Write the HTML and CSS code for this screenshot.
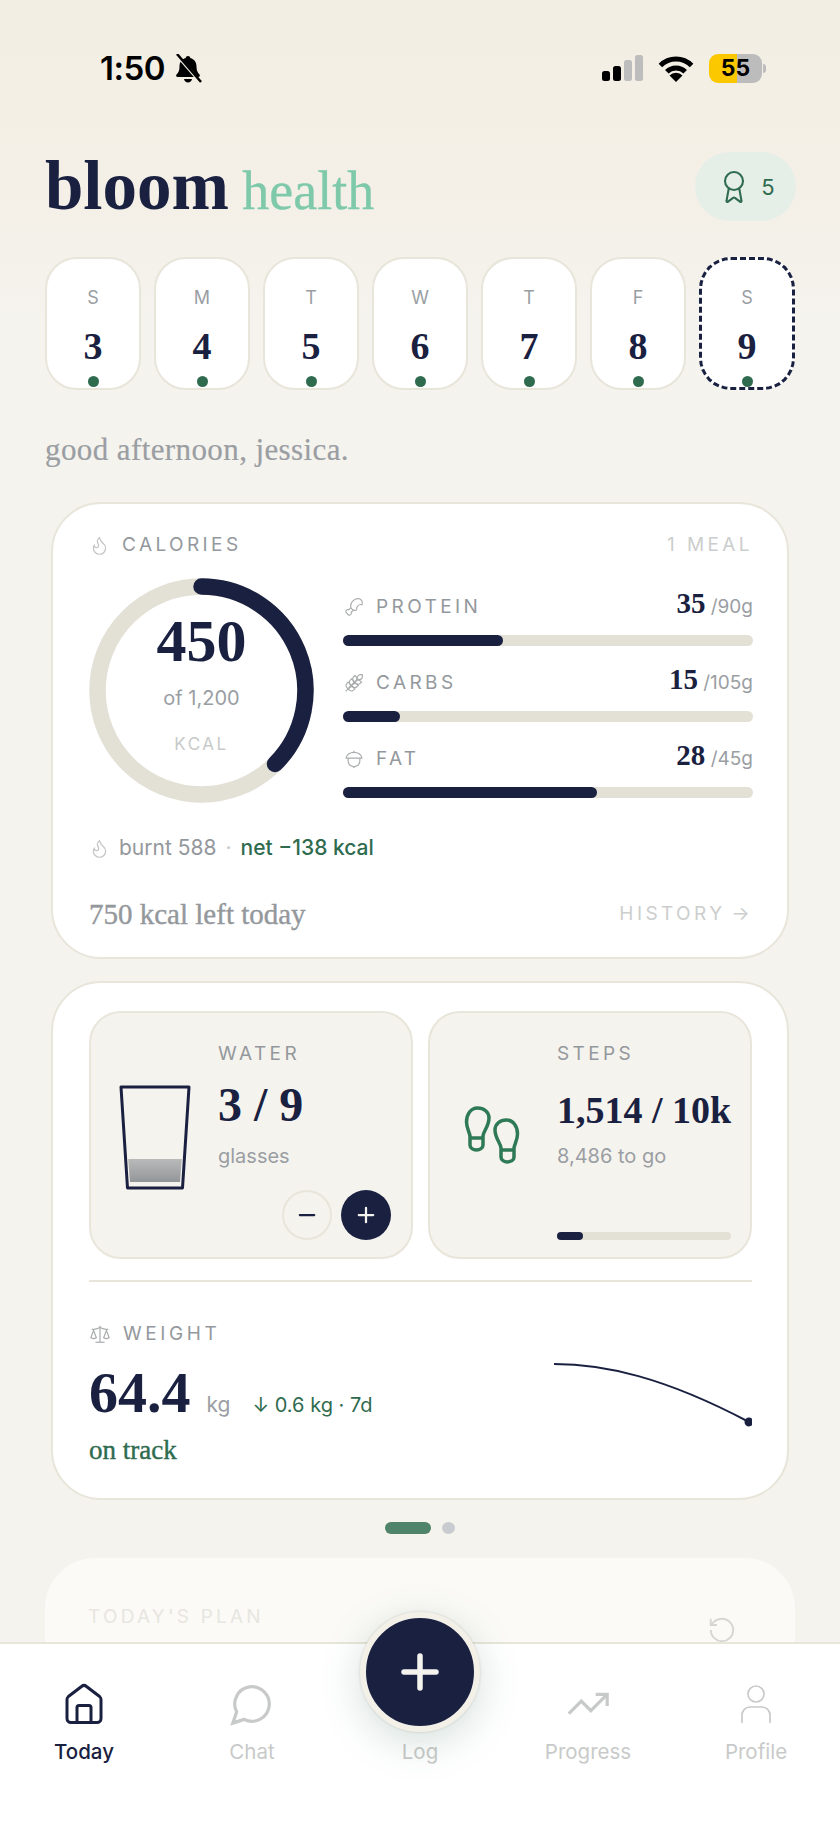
FILE: index.html
```html
<!DOCTYPE html>
<html lang="en">
<head>
    <meta charset="UTF-8">
    <meta name="viewport" content="width=device-width, initial-scale=1.0">
    <title>bloom health</title>
    <link rel="stylesheet" href="styles.css">
</head>
<body>
    <div class="app">
        <div class="status-bar">
            <div class="status-left">
                <span class="clock">1:50</span>
                <svg class="bell" viewBox="0 0 28 29">
                    <path d="M14 2c1.300 0 2.200.9 2.300 2.100 4 1 6.200 4.300 6.200 8.400 0 4 1 5.800 3 8 .8 1 .2 2.500-1.200 2.500H3.700c-1.400 0-2-1.500-1.200-2.500 2-2.200 3-4 3-8 0-4.100 2.200-7.400 6.200-8.400C11.800 2.900 12.700 2 14 2z"/>
                    <path d="M10 25h8c-.3 2-2 3.500-4 3.500s-3.700-1.500-4-3.500z"/>
                    <path class="bell-gap" d="M1 -1 27 29"/>
                    <path class="bell-slash" d="M3 0 27 28"/>
                </svg>
            </div>
            <div class="status-right">
                <svg class="signal" viewBox="0 0 41 26">
                    <rect x="0" y="16" width="8" height="10" rx="2.500"/>
                    <rect x="11" y="11" width="8" height="15" rx="2.500"/>
                    <rect class="off" x="22" y="5" width="8" height="21" rx="2.500"/>
                    <rect class="off" x="33" y="0" width="8" height="26" rx="2.500"/>
                </svg>
                <svg class="wifi" viewBox="0 0 36 27">
                    <path d="M2.400 10.400a22 22 0 0 1 31.200 0"/>
                    <path d="M8.800 16.800a13 13 0 0 1 18.400 0"/>
                    <path class="wifi-dot" d="M18 27 11.500 20.500a9 9 0 0 1 13 0z"/>
                </svg>
                <div class="battery">55</div>
            </div>
        </div>

        <div class="top-row">
            <h1 class="logo">bloom <span>health</span></h1>
            <div class="award">
                <svg viewBox="0 0 24 24"><path d="m15.500 12.900 1.500 8.500a.5.500 0 0 1-.8.500l-3.600-2.700a1 1 0 0 0-1.200 0l-3.600 2.700a.5.500 0 0 1-.8-.5l1.500-8.500"/><circle cx="12" cy="8" r="6"/></svg>
                <span>5</span>
            </div>
        </div>

        <div class="days">
            <div class="day"><span class="day-name">S</span><span class="day-num">3</span><i class="day-dot"></i></div>
            <div class="day"><span class="day-name">M</span><span class="day-num">4</span><i class="day-dot"></i></div>
            <div class="day"><span class="day-name">T</span><span class="day-num">5</span><i class="day-dot"></i></div>
            <div class="day"><span class="day-name">W</span><span class="day-num">6</span><i class="day-dot"></i></div>
            <div class="day"><span class="day-name">T</span><span class="day-num">7</span><i class="day-dot"></i></div>
            <div class="day"><span class="day-name">F</span><span class="day-num">8</span><i class="day-dot"></i></div>
            <div class="day today"><span class="day-name">S</span><span class="day-num">9</span><i class="day-dot"></i></div>
        </div>

        <p class="greeting">good afternoon, jessica.</p>

        <section class="card calories">
            <div class="card-head">
                <span class="label">
                    <svg class="flame" viewBox="0 0 24 24"><path d="M8.500 14.500A2.500 2.500 0 0 0 11 12c0-1.400-.5-2-1-3-1.100-2.100-.2-4.100 2-6 .5 2.500 2 4.900 4 6.500s3 3.500 3 5.500a7 7 0 1 1-14 0c0-1.200.4-2.300 1-3a2.500 2.500 0 0 0 2.500 2.500z"/></svg>
                    CALORIES
                </span>
                <span class="label faint">1 MEAL</span>
            </div>

            <div class="calorie-body">
                <div class="ring">
                    <svg viewBox="0 0 225 225">
                        <circle class="ring-track" cx="112.500" cy="112.500" r="104"/>
                        <path class="ring-fill" d="M112.500 8.500A104 104 0 0 1 186 186"/>
                    </svg>
                    <div class="ring-text">
                        <span class="ring-num">450</span>
                        <span class="ring-of">of 1,200</span>
                        <span class="ring-unit">KCAL</span>
                    </div>
                </div>

                <div class="macros">
                    <div class="macro">
                        <div class="macro-head">
                            <span class="label">
                                <svg class="macro-icon" viewBox="0 0 24 24"><path d="M15.400 15.600a7.900 6 135 1 1 6.200-6.200 4.500 3.400 135 0 0-6.200 6.200"/><path d="m8.300 12.700-2.600 2.600a2.500 2.500 0 1 0-1.700 4.700 2.500 2.500 0 1 0 4.700-1.700l2.600-2.600"/></svg>
                                PROTEIN
                            </span>
                            <span class="macro-val"><b>35</b> /90g</span>
                        </div>
                        <div class="bar"><div class="bar-fill" style="width: 39%"></div></div>
                    </div>
                    <div class="macro">
                        <div class="macro-head">
                            <span class="label">
                                <svg class="macro-icon" viewBox="0 0 24 24"><path d="M2 22 16 8"/><path d="M3.500 12.500 5 11l1.500 1.500a3.500 3.500 0 0 1 0 5L5 19l-1.500-1.500a3.500 3.500 0 0 1 0-5z"/><path d="M7.500 8.500 9 7l1.500 1.500a3.500 3.500 0 0 1 0 5L9 15l-1.500-1.500a3.500 3.500 0 0 1 0-5z"/><path d="M11.500 4.500 13 3l1.500 1.500a3.500 3.500 0 0 1 0 5L13 11l-1.500-1.500a3.500 3.500 0 0 1 0-5z"/><path d="M20 2h2v2a4 4 0 0 1-4 4h-2V6a4 4 0 0 1 4-4z"/><path d="M11.500 17.500 13 19l-1.500 1.500a3.500 3.500 0 0 1-5 0L5 19l1.500-1.500a3.500 3.500 0 0 1 5 0z"/><path d="M15.500 13.500 17 15l-1.500 1.500a3.500 3.500 0 0 1-5 0L9 15l1.500-1.500a3.500 3.500 0 0 1 5 0z"/><path d="M19.500 9.500 21 11l-1.500 1.500a3.500 3.500 0 0 1-5 0L13 11l1.500-1.500a3.500 3.500 0 0 1 5 0z"/></svg>
                                CARBS
                            </span>
                            <span class="macro-val"><b>15</b> /105g</span>
                        </div>
                        <div class="bar"><div class="bar-fill" style="width: 14%"></div></div>
                    </div>
                    <div class="macro">
                        <div class="macro-head">
                            <span class="label">
                                <svg class="macro-icon" viewBox="0 0 24 24"><path d="M12 4V2"/><path d="M2.500 11c.5-4.500 5-7 9.500-7s9 2.500 9.500 7z"/><path d="M5 11v3a7 7 0 0 0 5.300 6.800c.7.200 1.200.6 1.700 1.200.5-.6 1-1 1.700-1.200A7 7 0 0 0 19 14v-3"/></svg>
                                FAT
                            </span>
                            <span class="macro-val"><b>28</b> /45g</span>
                        </div>
                        <div class="bar"><div class="bar-fill" style="width: 62%"></div></div>
                    </div>
                </div>
            </div>

            <div class="burnt">
                <svg class="flame" viewBox="0 0 24 24"><path d="M8.500 14.500A2.500 2.500 0 0 0 11 12c0-1.400-.5-2-1-3-1.100-2.100-.2-4.100 2-6 .5 2.500 2 4.900 4 6.500s3 3.500 3 5.500a7 7 0 1 1-14 0c0-1.200.4-2.300 1-3a2.500 2.500 0 0 0 2.500 2.500z"/></svg>
                <span>burnt 588</span>
                <span class="burnt-sep">·</span>
                <span class="net">net −138 kcal</span>
            </div>

            <div class="card-foot">
                <span class="left-today">750 kcal left today</span>
                <span class="label faint">HISTORY <span class="arrow">→</span></span>
            </div>
        </section>

        <section class="card trackers">
            <div class="tiles">
                <div class="tile">
                    <div class="tile-art">
                        <svg class="glass" viewBox="0 0 72 106">
                            <defs>
                                <linearGradient id="waterFill" x1="0" y1="0" x2="0" y2="1">
                                    <stop offset="0" stop-color="#b9baba"/>
                                    <stop offset="1" stop-color="#939699"/>
                                </linearGradient>
                            </defs>
                            <path d="M9.200 74H62.800L61 97H11z" fill="url(#waterFill)"/>
                            <path class="glass-line" d="M2 2H70L63.500 103H8.500z"/>
                        </svg>
                    </div>
                    <div class="tile-body">
                        <span class="label">WATER</span>
                        <span class="tile-num">3 / 9</span>
                        <span class="tile-sub">glasses</span>
                        <div class="stepper">
                            <button class="step-btn minus"><svg viewBox="0 0 20 20"><path d="M2 10H18"/></svg></button>
                            <button class="step-btn plus"><svg viewBox="0 0 20 20"><path d="M2 10H18M10 2V18"/></svg></button>
                        </div>
                    </div>
                </div>
                <div class="tile">
                    <div class="tile-art">
                        <svg class="feet" viewBox="0 0 56 62">
                            <path d="M13.500 2C7 2 2.500 8 2.500 16c0 6 3 10 3.500 14v9c0 6.500 13 6.500 13 0v-9c.5-5 6-10 6-18C25 6 20 2 13.500 2z"/>
                            <path d="M6 32h13"/>
                            <path d="M42.500 14c6.500 0 11 6 11 14 0 6-3 10-3.500 14v9c0 6.500-13 6.500-13 0v-9c-.5-5-6-10-6-18 0-6 5-10 11.500-10z"/>
                            <path d="M37 44h13"/>
                        </svg>
                    </div>
                    <div class="tile-body">
                        <span class="label">STEPS</span>
                        <span class="tile-num steps-num">1,514 / 10k</span>
                        <span class="tile-sub">8,486 to go</span>
                        <div class="bar steps-bar"><div class="bar-fill" style="width: 15%"></div></div>
                    </div>
                </div>
            </div>

            <div class="divider"></div>

            <span class="label weight-label">
                <svg class="scale" viewBox="0 0 24 24"><path d="m16 16 3-8 3 8c-.9.600-1.900 1-3 1s-2.100-.4-3-1z"/><path d="m2 16 3-8 3 8c-.9.600-1.900 1-3 1s-2.100-.4-3-1z"/><path d="M7 21h10"/><path d="M12 3v18"/><path d="M3 7h2c2 0 5-1 7-2 2 1 5 2 7 2h2"/></svg>
                WEIGHT
            </span>
            <div class="weight-body">
                <div>
                    <div class="weight-row">
                        <span class="weight-num">64.4</span>
                        <span class="weight-unit">kg</span>
                        <span class="weight-delta">↓ 0.6 kg · 7d</span>
                    </div>
                    <p class="on-track">on track</p>
                </div>
                <svg class="spark" viewBox="0 0 198 64">
                    <path d="M0 1C50 1 110 14 195 59"/>
                    <circle cx="195" cy="59" r="4.500"/>
                </svg>
            </div>
        </section>

        <div class="pager"><i class="pager-on"></i><i class="pager-off"></i></div>

        <section class="plan">
            <span class="plan-title">TODAY'S PLAN</span>
            <svg class="refresh" viewBox="0 0 24 24"><path d="M3 12a9 9 0 1 0 9-9 9.800 9.800 0 0 0-6.700 2.700L3 8"/><path d="M3 3v5h5"/></svg>
        </section>

        <nav class="tabbar">
            <div class="tab active">
                <svg class="tab-icon" viewBox="0 0 38 41" width="38" height="41"><path d="M6 39h26a4 4 0 0 0 4-4V16c0-1.200-.5-2.200-1.400-3L21.500 3c-1.400-1.200-3.600-1.200-5 0L3.400 13c-.9.800-1.400 1.800-1.400 3v19a4 4 0 0 0 4 4z"/><path d="M12 39V24a2 2 0 0 1 2-2h10a2 2 0 0 1 2 2v15"/></svg>
                <span>Today</span>
            </div>
            <div class="tab">
                <svg class="tab-icon" viewBox="0 0 24 24" width="46" height="46"><path d="M7.900 20A9 9 0 1 0 4 16.100L2 22z"/></svg>
                <span>Chat</span>
            </div>
            <div class="tab">
                <div class="tab-icon-space"></div>
                <span>Log</span>
            </div>
            <div class="tab">
                <svg class="tab-icon" viewBox="0 0 24 24" width="46" height="46"><path d="M22 7 13.500 15.500 8.500 10.500 2 17"/><path d="M16 7h6v6"/></svg>
                <span>Progress</span>
            </div>
            <div class="tab">
                <svg class="tab-icon" viewBox="0 0 32 40" width="32" height="40"><circle cx="16" cy="10" r="8"/><path d="M2 39V31a8 8 0 0 1 8-8h12a8 8 0 0 1 8 8v8"/></svg>
                <span>Profile</span>
            </div>
            <button class="fab"><svg viewBox="0 0 38 38"><path d="M3 19H35M19 3V35"/></svg></button>
        </nav>
    </div>
</body>
</html>
```
FILE: styles.css
```css
* {
    margin: 0;
    padding: 0;
    box-sizing: border-box;
}

body {
    font-family: Inter, "Liberation Sans", sans-serif;
    background-color: #f5f3ee;
}

svg {
    display: block;
}

.app {
    position: relative;
    width: 840px;
    height: 1826px;
    overflow: hidden;
    background: linear-gradient(#f2eee3 0, #f4f0e7 200px, #f5f3ee 320px, #f4f3ee 1826px);
}

/* status bar */
.status-bar {
    display: flex;
    justify-content: space-between;
    align-items: center;
    height: 136px;
    padding: 0 78px 0 100px;
}

.status-left {
    display: flex;
    align-items: center;
    gap: 9px;
}

.clock {
    font-size: 33px;
    font-weight: 600;
    letter-spacing: -0.5px;
    color: #000;
}

.bell {
    width: 28px;
    height: 29px;
}

.bell-gap {
    stroke: #f2eee3;
    stroke-width: 3;
}

.bell-slash {
    stroke: #000;
    stroke-width: 2.5;
}

.status-right {
    display: flex;
    align-items: center;
    gap: 15px;
}

.signal {
    width: 41px;
    height: 26px;
}

.signal .off {
    fill: #bdbdbd;
}

.wifi {
    width: 36px;
    height: 27px;
}

.wifi path {
    fill: none;
    stroke: #000;
    stroke-width: 5;
}

.wifi .wifi-dot {
    fill: #000;
    stroke: none;
}

.battery {
    position: relative;
    width: 53px;
    height: 29px;
    border-radius: 9px;
    background: linear-gradient(90deg, #fbc800 53%, #bcbcbc 53%);
    font-size: 23px;
    font-weight: 700;
    line-height: 29px;
    text-align: center;
    color: #000;
}

.battery::after {
    content: "";
    position: absolute;
    top: 10px;
    right: -4px;
    width: 3px;
    height: 9px;
    border-radius: 0 3px 3px 0;
    background: #bcbcbc;
}

/* logo row */
.top-row {
    display: flex;
    justify-content: space-between;
    align-items: flex-start;
    height: 85px;
    padding: 16px 44px 0 45px;
}

.logo {
    font-family: "Liberation Serif", serif;
    font-size: 69px;
    font-weight: 700;
    line-height: 69px;
    color: #1a2140;
}

.logo span {
    margin-left: -4px;
    font-size: 54px;
    font-weight: 400;
    -webkit-text-stroke: 0.3px #7fc9ab;
    color: #7fc9ab;
}

.award {
    display: flex;
    align-items: center;
    justify-content: center;
    gap: 9px;
    width: 101px;
    height: 69px;
    border-radius: 35px;
    background: #e6eee8;
    font-size: 22px;
    color: #2f6b4f;
}

.award svg {
    width: 36px;
    height: 36px;
    fill: none;
    stroke: #2f6b4f;
    stroke-width: 1.4;
}

/* week strip */
.days {
    display: flex;
    gap: 13px;
    margin-top: 36px;
    padding: 0 45px;
}

.day {
    display: flex;
    flex-direction: column;
    align-items: center;
    width: 96px;
    height: 133px;
    padding-top: 27px;
    border: 2px solid #e8e5da;
    border-radius: 32px;
    background: #fff;
}

.day.today {
    border: 3px dashed #1a2140;
    padding-top: 26px;
}

.day-name {
    font-size: 18px;
    line-height: 24px;
    color: #9a9ea3;
}

.day-num {
    margin-top: 16px;
    font-family: "Liberation Serif", serif;
    font-size: 38px;
    font-weight: 700;
    line-height: 40px;
    color: #1a2140;
}

.day-dot {
    width: 11px;
    height: 11px;
    margin-top: 10px;
    border-radius: 50%;
    background: #2f6b4f;
}

.greeting {
    margin-top: 42px;
    padding-left: 45px;
    font-family: "Liberation Serif", serif;
    font-size: 31px;
    line-height: 36px;
    letter-spacing: 0.4px;
    -webkit-text-stroke: 0.2px #9a9ea3;
    color: #9a9ea3;
}

/* cards */
.card {
    margin: 0 51px;
    border: 2px solid #e8e5da;
    border-radius: 50px;
    background: #fff;
}

.label {
    display: inline-flex;
    align-items: center;
    gap: 12px;
    font-size: 19px;
    line-height: 24px;
    letter-spacing: 3.4px;
    color: #94989c;
}

.label.faint {
    color: #cccecd;
}

.flame {
    width: 21px;
    height: 21px;
    fill: none;
    stroke: #c4c5c3;
    stroke-width: 1.4;
}

.calories {
    margin-top: 34px;
    padding: 29px 34px 25px 36px;
}

.card-head,
.card-foot {
    display: flex;
    justify-content: space-between;
    align-items: center;
}

.calorie-body {
    display: flex;
    gap: 29px;
    margin-top: 21px;
}

.ring {
    display: grid;
    flex: none;
    width: 225px;
    height: 225px;
}

.ring svg,
.ring-text {
    grid-area: 1 / 1;
}

.ring-track {
    fill: none;
    stroke: #e3e0d6;
    stroke-width: 16.5;
}

.ring-fill {
    fill: none;
    stroke: #1a2140;
    stroke-width: 16.5;
    stroke-linecap: round;
}

.ring-text {
    display: flex;
    flex-direction: column;
    align-items: center;
    padding-top: 33px;
}

.ring-num {
    font-family: "Liberation Serif", serif;
    font-size: 60px;
    font-weight: 700;
    line-height: 60px;
    color: #1a2140;
}

.ring-of {
    margin-top: 14px;
    font-size: 20px;
    line-height: 26px;
    color: #9a9ea3;
}

.ring-unit {
    margin-top: 23px;
    font-size: 17px;
    line-height: 20px;
    letter-spacing: 2.5px;
    color: #c8cac9;
}

.macros {
    flex: 1;
    display: flex;
    flex-direction: column;
    gap: 21px;
    padding-top: 13px;
}

.macro-head {
    display: flex;
    justify-content: space-between;
    align-items: center;
    height: 28px;
    margin-bottom: 16px;
}

.macro-head .label {
    margin-top: 4px;
}

.macro-icon {
    width: 20px;
    height: 20px;
    margin-left: 1px;
    fill: none;
    stroke: #a9acad;
    stroke-width: 1.4;
}

.macro-val {
    margin-top: -3px;
    font-size: 19px;
    color: #9a9ea3;
}

.macro-val b {
    font-family: "Liberation Serif", serif;
    font-size: 29px;
    color: #1a2140;
}

.bar {
    height: 11px;
    border-radius: 6px;
    background: #e3e0d6;
}

.bar-fill {
    height: 100%;
    border-radius: 6px;
    background: #1a2140;
}

.burnt {
    display: flex;
    align-items: center;
    margin-top: 31px;
    font-size: 21px;
    line-height: 28px;
    color: #94989c;
}

.burnt .flame {
    margin-right: 9px;
}

.burnt-sep {
    margin: 0 9px;
    color: #c8cac9;
}

.net {
    font-weight: 500;
    color: #2f6b4f;
}

.card-foot {
    margin-top: 34px;
    height: 36px;
}

.left-today {
    font-family: "Liberation Serif", serif;
    font-size: 29px;
    -webkit-text-stroke: 0.4px #94989c;
    color: #94989c;
}

.arrow {
    margin-left: -6px;
}

/* water, steps, weight */
.trackers {
    margin-top: 22px;
    padding: 28px 35px 33px 36px;
}

.tiles {
    display: grid;
    grid-template-columns: 324px 324px;
    gap: 15px;
}

.tile {
    display: grid;
    grid-template-columns: 127px 1fr;
    height: 248px;
    padding: 29px 20px 17px 0;
    border: 2px solid #e8e5da;
    border-radius: 32px;
    background: #f5f3ee;
}

.tile-art {
    display: flex;
    justify-content: center;
    align-items: center;
}

.glass {
    width: 72px;
    height: 106px;
    margin-top: -6px;
}

.glass-line {
    fill: none;
    stroke: #1a2140;
    stroke-width: 3;
    stroke-linejoin: round;
}

.feet {
    width: 56px;
    height: 62px;
    margin-top: -8px;
    margin-right: 3px;
    fill: none;
    stroke: #2f7a56;
    stroke-width: 3.5;
}

.tile-body {
    display: flex;
    flex-direction: column;
    align-items: flex-start;
}

.tile-num {
    height: 50px;
    margin-top: 14px;
    font-family: "Liberation Serif", serif;
    font-size: 48px;
    font-weight: 700;
    line-height: 50px;
    color: #1a2140;
}

.steps-num {
    font-size: 38px;
    line-height: 60px;
    white-space: nowrap;
}

.tile-sub {
    margin-top: 14px;
    font-size: 20px;
    line-height: 24px;
    color: #9a9ea3;
}

.stepper {
    display: flex;
    gap: 9px;
    margin-top: auto;
    margin-left: auto;
}

.step-btn {
    display: flex;
    justify-content: center;
    align-items: center;
    width: 50px;
    height: 50px;
    border-radius: 50%;
}

.step-btn svg {
    width: 18px;
    height: 18px;
    fill: none;
    stroke-width: 2.5;
    stroke-linecap: round;
}

.step-btn.minus {
    border: 2px solid #e8e5da;
    background: transparent;
}

.step-btn.minus svg {
    stroke: #1a2140;
}

.step-btn.plus {
    border: none;
    background: #1a2140;
}

.step-btn.plus svg {
    stroke: #f5f3ee;
}

.steps-bar {
    align-self: stretch;
    height: 8px;
    margin-top: auto;
}

.divider {
    height: 2px;
    margin-top: 21px;
    background: #e8e5da;
}

.weight-label {
    margin-top: 40px;
    letter-spacing: 3.6px;
}

.scale {
    width: 22px;
    height: 22px;
    fill: none;
    stroke: #a9acad;
    stroke-width: 1.3;
}

.weight-body {
    display: flex;
    justify-content: space-between;
    align-items: flex-start;
    margin-top: 14px;
}

.weight-row {
    display: flex;
    align-items: baseline;
    height: 60px;
}

.weight-num {
    font-family: "Liberation Serif", serif;
    font-size: 58px;
    font-weight: 700;
    line-height: 60px;
    color: #1a2140;
}

.weight-unit {
    margin-left: 16px;
    font-size: 21px;
    color: #9a9ea3;
}

.weight-delta {
    margin-left: 22px;
    font-size: 20px;
    color: #2f6b4f;
}

.on-track {
    margin-top: 12px;
    font-family: "Liberation Serif", serif;
    font-size: 27px;
    line-height: 30px;
    -webkit-text-stroke: 0.4px #2f6b4f;
    color: #2f6b4f;
}

.spark {
    width: 198px;
    height: 64px;
}

.spark path {
    fill: none;
    stroke: #1a2140;
    stroke-width: 2;
}

.spark circle {
    fill: #1a2140;
}

.pager {
    display: flex;
    justify-content: center;
    gap: 11px;
    margin-top: 22px;
}

.pager-on {
    width: 46px;
    height: 12px;
    border-radius: 6px;
    background: #50846a;
}

.pager-off {
    width: 13px;
    height: 12px;
    border-radius: 50%;
    background: #c8ccd0;
}

.plan {
    display: flex;
    justify-content: space-between;
    align-items: flex-start;
    height: 200px;
    margin: 24px 45px 0;
    padding: 47px 58px 0 43px;
    border-radius: 50px;
    background: #fbfaf7;
}

.plan-title {
    font-size: 19px;
    line-height: 24px;
    letter-spacing: 3.2px;
    color: #e8e6e0;
}

.refresh {
    width: 30px;
    height: 30px;
    margin-top: 10px;
    fill: none;
    stroke: #d6d6d2;
    stroke-width: 1.5;
}

/* bottom nav */
.tabbar {
    position: absolute;
    left: 0;
    right: 0;
    bottom: 0;
    display: grid;
    grid-template-columns: repeat(5, 1fr);
    height: 184px;
    border-top: 2px solid #e8e5da;
    background: #fff;
}

.tab {
    display: flex;
    flex-direction: column;
    align-items: center;
    padding-top: 37px;
    font-size: 20.5px;
    line-height: 24px;
    color: #c8cac9;
}

.tab-icon-space,
.tab-icon {
    height: 46px;
    margin-bottom: 13px;
}

.tab-icon {
    fill: none;
    stroke: #c8cac9;
    stroke-width: 1.7;
}

.tab.active {
    font-weight: 500;
    color: #1a2140;
}

.tab.active .tab-icon {
    stroke: #1a2140;
    stroke-width: 3;
}

.fab {
    position: absolute;
    top: -32px;
    left: 360px;
    display: flex;
    justify-content: center;
    align-items: center;
    width: 120px;
    height: 120px;
    border: 6px solid #f3f0e8;
    border-radius: 50%;
    background: #1a2140;
    box-shadow: 0 0 3px rgba(0, 0, 0, 0.15), 0 10px 40px rgba(60, 110, 85, 0.22);
}

.fab svg {
    width: 38px;
    height: 38px;
    fill: none;
    stroke: #f5f3ee;
    stroke-width: 5.5;
    stroke-linecap: round;
}
```
